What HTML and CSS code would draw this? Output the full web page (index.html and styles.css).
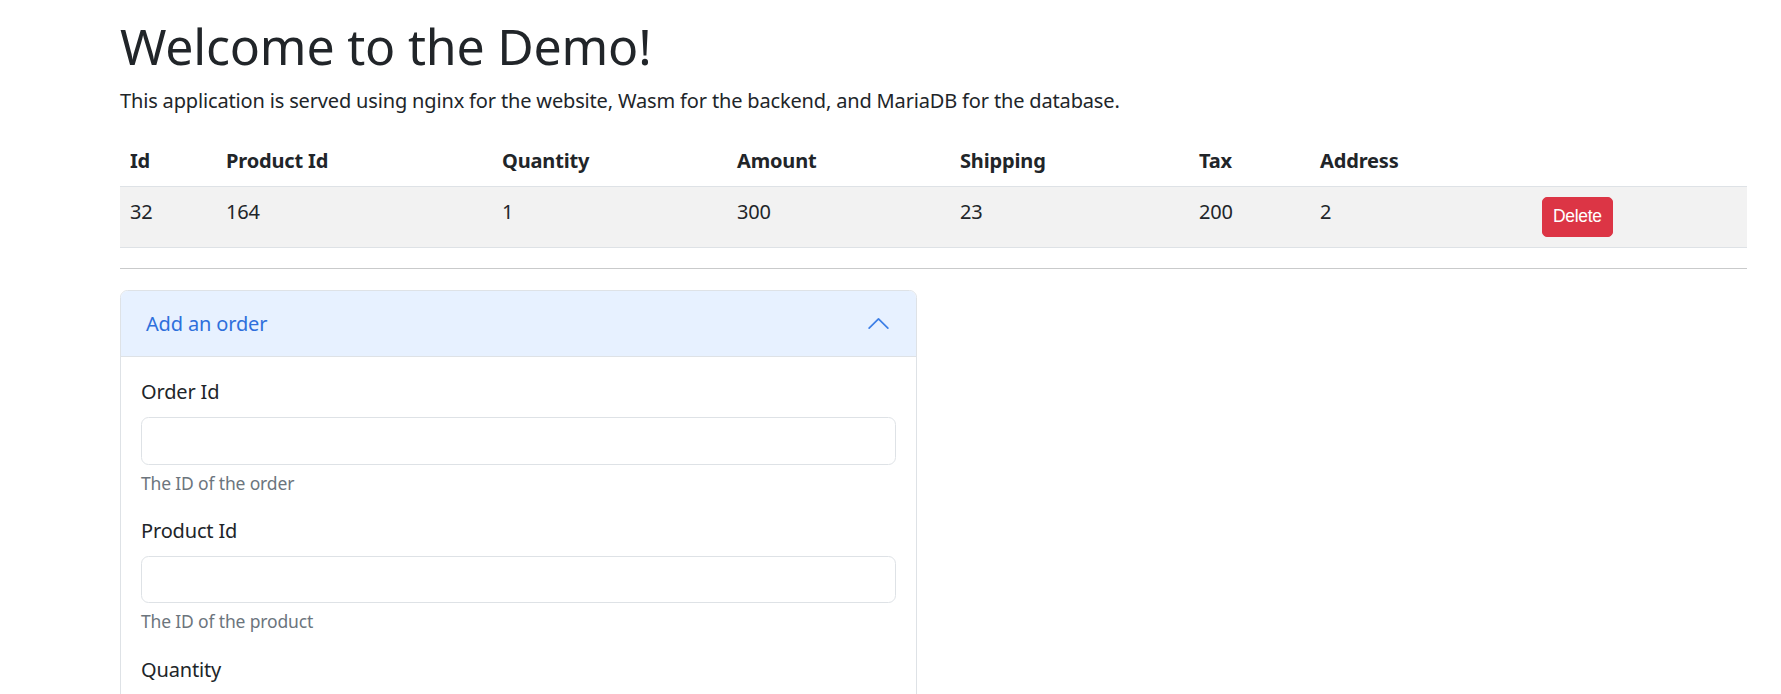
FILE: index.html
```html
<!DOCTYPE html>
<html lang="en">
<head>
<meta charset="utf-8">
<title>Demo</title>
<link rel="stylesheet" href="styles.css">
</head>
<body>
<div class="page">
  <h1 class="title">Welcome to the Demo!</h1>
  <p class="intro">This application is served using nginx for the website, Wasm for the backend, and MariaDB for the database.</p>
  <table class="orders">
    <thead>
      <tr>
        <th class="c1">Id</th>
        <th class="c2">Product Id</th>
        <th class="c3">Quantity</th>
        <th class="c4">Amount</th>
        <th class="c5">Shipping</th>
        <th class="c6">Tax</th>
        <th class="c7">Address</th>
        <th class="c8"></th>
      </tr>
    </thead>
    <tbody>
      <tr>
        <td>32</td>
        <td>164</td>
        <td>1</td>
        <td>300</td>
        <td>23</td>
        <td>200</td>
        <td>2</td>
        <td><button class="btn-del" type="button">Delete</button></td>
      </tr>
    </tbody>
  </table>
  <hr class="sep">
  <div class="accordion">
    <div class="acc-header">
      <span class="acc-title">Add an order</span>
      <svg class="chev" width="25" height="25" viewBox="0 0 16 16" aria-hidden="true"><path d="M2 11 L8 5 L14 11" fill="none" stroke="#3d7fe6" stroke-width="1.1" stroke-linecap="round" stroke-linejoin="round"/></svg>
    </div>
    <div class="acc-body">
      <div class="field">
        <label class="lbl">Order Id</label>
        <input class="inp" type="text">
        <div class="help">The ID of the order</div>
      </div>
      <div class="field">
        <label class="lbl">Product Id</label>
        <input class="inp" type="text">
        <div class="help">The ID of the product</div>
      </div>
      <div class="field">
        <label class="lbl">Quantity</label>
        <input class="inp" type="text">
        <div class="help">The quantity of the product</div>
      </div>
    </div>
  </div>
</div>
</body>
</html>
```
FILE: styles.css
```css
html, body {
  margin: 0;
  padding: 0;
  background: #ffffff;
}
body {
  font-family: "Noto Sans", "Open Sans", sans-serif;
  font-size: 20px;
  line-height: 1.5;
  color: #212529;
  letter-spacing: -0.16px;
}
.page {
  box-sizing: border-box;
  width: 1781px;
  padding: 16px 34px 0 120px;
}
.title {
  margin: 0 0 10px;
  font-size: 50px;
  font-weight: 400;
  line-height: 1.2;
  letter-spacing: -0.2px;
}
.intro {
  margin: 0 0 20px;
}
.orders {
  width: 1627px;
  table-layout: fixed;
  border-collapse: collapse;
  margin-bottom: 20px;
}
.orders th,
.orders td {
  box-sizing: border-box;
  padding: 10px;
  text-align: left;
  vertical-align: top;
  border-bottom: 1px solid #dee2e6;
}
.orders th {
  font-weight: 700;
}
.orders tbody tr {
  background: #f2f2f2;
}
.c1 { width: 96px; }
.c2 { width: 276px; }
.c3 { width: 235px; }
.c4 { width: 223px; }
.c5 { width: 239px; }
.c6 { width: 121px; }
.c7 { width: 222px; }
.c8 { width: 215px; }
.btn-del {
  display: block;
  height: 40px;
  padding: 0 10px;
  border: 1px solid #dc3545;
  border-radius: 5px;
  background: #dc3545;
  color: #ffffff;
  font-family: "Liberation Sans", Arial, sans-serif;
  font-size: 17.5px;
  letter-spacing: -0.3px;
  line-height: 1;
}
.sep {
  margin: 0 0 21px;
  border: 0;
  border-top: 1px solid #c9cacb;
  height: 0;
}
.accordion {
  box-sizing: border-box;
  width: 797px;
  border: 1px solid #dee2e6;
  border-radius: 7.5px;
  overflow: hidden;
}
.acc-header {
  display: flex;
  align-items: center;
  justify-content: space-between;
  padding: 17.5px 25px;
  background: #e7f1ff;
  color: #2e6fdc;
  border-bottom: 1px solid #dee2e6;
}
.acc-title {
  line-height: 30px;
}
.chev {
  display: block;
  flex: none;
}
.acc-body {
  padding: 20px;
}
.field {
  margin-bottom: 20px;
}
.lbl {
  display: block;
  margin-bottom: 10px;
}
.inp {
  display: block;
  box-sizing: border-box;
  width: 100%;
  height: 47.5px;
  margin: 0;
  padding: 7.5px 15px;
  border: 1px solid #dee2e6;
  border-radius: 7.5px;
  background: #ffffff;
  font: inherit;
}
.help {
  margin-top: 5px;
  font-size: 17.5px;
  line-height: 1.5;
  color: #6c757d;
}
```
